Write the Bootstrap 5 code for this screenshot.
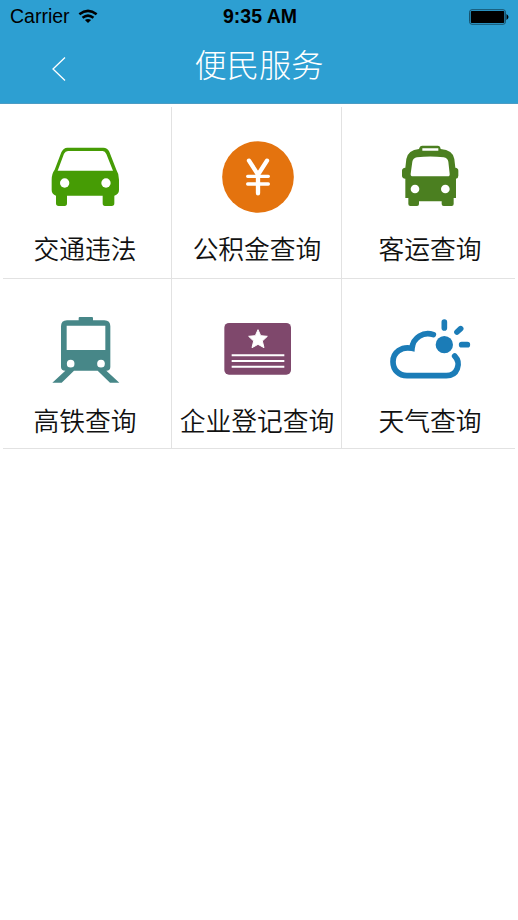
<!DOCTYPE html>
<html lang="zh-CN">
<head>
<meta charset="utf-8">
<meta name="viewport" content="width=device-width, initial-scale=1">
<title>便民服务</title>
<link href="https://cdn.jsdelivr.net/npm/bootstrap@5.3.0/dist/css/bootstrap.min.css" rel="stylesheet">
<style>
body { font-family: "Liberation Sans", "Noto Sans CJK SC", sans-serif; color: #111; overflow: hidden; }
.app-head { background: #2d9fd2; height: 104px; border-bottom: 1px solid #4b9cc4; }
.status-bar { height: 32px; padding: 0 8px 0 10px; color: #000; display: grid; grid-template-columns: 1fr auto 1fr; font-size: 19.5px; line-height: 33px; }
.clock { font-size: 19.5px; }
.title-bar { height: 71px; display: grid; grid-template-columns: 118px 1fr 118px; }
.title-bar h1 { font: 300 32.3px/62px "Noto Sans CJK SC", sans-serif; }
.back-link { padding: 25px 0 0 52px; }
.tiles { display: grid; grid-template-columns: 172px 170px 176px; }
.tile { color: #111; }
.tile:not(:last-child) { border-right: 1px solid #e2e2e2; }
.tile:first-child { padding-right: 1px; }
.tile:nth-child(2) { padding-left: 1px; }
.tiles-a { height: 171px; margin-top: 3px; }
.tiles-b { height: 169px; }
.tiles .tile { padding-top: 28px; }
.tile-name { font: 350 25.75px/38px "Noto Sans CJK SC", sans-serif; margin-top: 14px; white-space: nowrap; }
.rule { height: 1px; margin: 0 3px; background: #e2e2e2; }
</style>
<script src="https://cdn.jsdelivr.net/npm/bootstrap@5.3.0/dist/js/bootstrap.bundle.min.js"></script>
</head>
<body class="bg-white">
<header class="app-head">
  <div class="status-bar">
    <div class="d-flex align-items-center"><span>Carrier</span>
      <svg class="ms-2" width="20" height="15" viewBox="0 0 22 16" fill="none" stroke="#000" stroke-width="2.8"><path d="M1.500 5.500Q11-2 20.500 5.500M5 9.400Q11 4.600 17 9.400"/><path d="M7.600 11.900Q11 9.400 14.400 11.900L11 15.200Z" fill="#000" stroke="none"/></svg>
    </div>
    <div class="clock fw-bold">9:35 AM</div>
    <div class="d-flex align-items-center justify-content-end">
      <svg width="41" height="16" viewBox="0 0 41 16"><rect x=".5" y=".7" width="36" height="14.600" rx="2.500" fill="none" stroke="#17536e"/><rect x="1.800" y="2" width="33.500" height="12" rx="1" fill="#000"/><path d="M37.500 5q4 3 0 6z"/></svg>
    </div>
  </div>
  <div class="title-bar">
    <a href="#" class="back-link d-block" aria-label="返回"><svg class="d-block" width="14" height="24" viewBox="0 0 14 24" fill="none" stroke="#fff" stroke-width="1.300"><path d="M13 .5L1 12L13 23.500"/></svg></a>
    <h1 class="text-white text-center m-0">便民服务</h1>
  </div>
</header>
<main>
  <div class="tiles tiles-a">
    <a href="#" class="tile d-flex flex-column align-items-center text-decoration-none">
      <svg width="90" height="80" viewBox="0 0 270 240"><path fill="#469c05" fill-rule="evenodd" d="M82 38H190Q202 38 208 50L229 104Q237 116 237 134V165Q237 178 223 182V205Q223 213 215 213H195Q188 213 188 205V182H81V205Q81 213 74 213H56Q48 213 48 205V182Q35 178 35 165V134Q35 116 44 104L64 52Q70 38 82 38ZM84 48Q76 48 72 56L53 107H219L199 57Q195 48 188 48Z"/><g fill="#fff"><circle cx="74" cy="144" r="14"/><circle cx="198" cy="144" r="14"/></g></svg>
      <div class="tile-name">交通违法</div></a>
    <a href="#" class="tile d-flex flex-column align-items-center text-decoration-none">
      <svg width="90" height="80" viewBox="0 0 270 240"><circle cx="138" cy="126" r="107.500" fill="#e4730e"/><g fill="none" stroke="#fff" stroke-linecap="round"><path stroke-width="13" d="M111 77L138 119L165 77M138 119V175"/><path stroke-width="10" d="M107 124H169M107 147H169"/></g></svg>
      <div class="tile-name">公积金查询</div></a>
    <a href="#" class="tile d-flex flex-column align-items-center text-decoration-none">
      <svg width="90" height="80" viewBox="0 0 270 240"><path fill="#4b7f20" fill-rule="evenodd" d="M112 32H158Q166 32 167 42Q204 45 208 72L211 98Q220 99 220 107V122Q220 130 213 131V189H206V207Q206 213 200 213H176Q170 213 170 207V199H102V207Q102 213 96 213H76Q70 213 70 207V189H61V131Q51 130 51 122V107Q51 99 61 98L64 72Q69 45 102 42Q104 32 112 32ZM112 40V47H160V40ZM96 67Q84 69 82 80L77 116Q76 124 84 124H188Q195 124 194 116L190 80Q188 69 176 67Q136 62 96 67Z"/><g fill="#fff"><circle cx="90" cy="162" r="13"/><circle cx="181" cy="162" r="13"/></g></svg>
      <div class="tile-name">客运查询</div></a>
  </div>
  <div class="rule"></div>
  <div class="tiles tiles-b">
    <a href="#" class="tile d-flex flex-column align-items-center text-decoration-none">
      <svg width="90" height="80" viewBox="0 0 270 240"><path fill="#478788" fill-rule="evenodd" d="M116 40V33Q116 30 119 30H156Q159 30 159 33V40H193Q211 40 211 58V180Q211 191 199 191L238 227H210L173 191H102L65 227H37L76 191Q63 191 63 180V58Q63 40 81 40ZM80 56V129H196V56Z"/><g fill="#fff"><circle cx="92" cy="170" r="11.500"/><circle cx="183" cy="170" r="11.500"/></g></svg>
      <div class="tile-name">高铁查询</div></a>
    <a href="#" class="tile d-flex flex-column align-items-center text-decoration-none">
      <svg width="90" height="80" viewBox="0 0 270 240"><rect x="37" y="48" width="200" height="155" rx="14" fill="#7f486c"/><path fill="#fff" stroke="#fff" stroke-width="3" stroke-linejoin="round" d="M138 68L146 86L166 88L151 102L156 122L138 112L120 122L125 102L110 88L130 86Z"/><path stroke="#fff" stroke-width="6" d="M59 145H217M59 162H217M59 179H217"/></svg>
      <div class="tile-name">企业登记查询</div></a>
    <a href="#" class="tile d-flex flex-column align-items-center text-decoration-none">
      <svg width="90" height="80" viewBox="0 0 270 240" fill="none" stroke="#1b7cb7" stroke-width="17" stroke-linecap="round"><path d="M145 83C116 73 84 91 81 124C50 117 24 136 24 164C24 190 43 206 66 206H184C217 206 230 169 209 147"/><circle cx="178" cy="113" r="26" fill="#1b7cb7" stroke="none"/><path d="M178 45V63M216 75L227 65M230 113H247"/></svg>
      <div class="tile-name">天气查询</div></a>
  </div>
  <div class="rule"></div>
</main>
</body>
</html>
